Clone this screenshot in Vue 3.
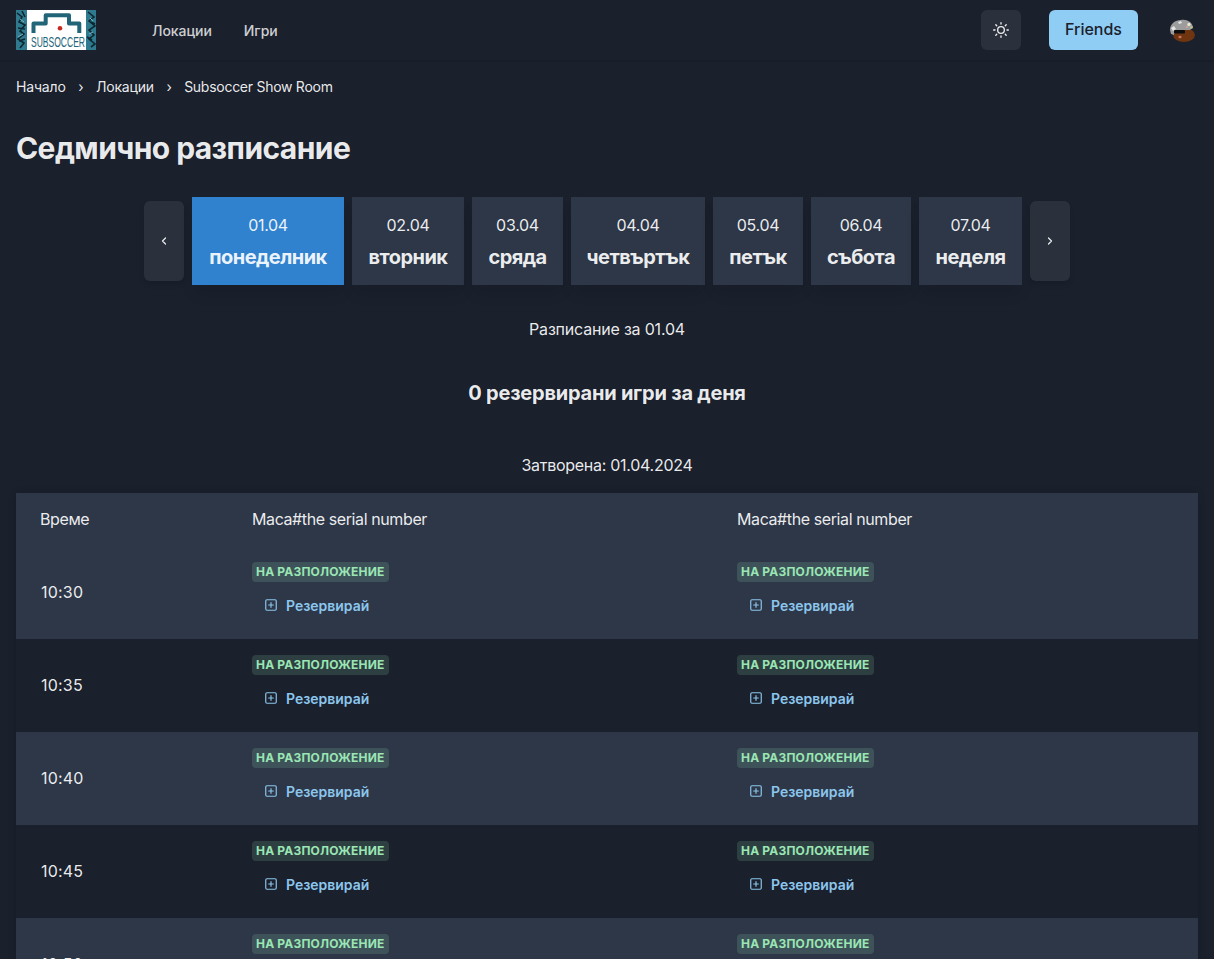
<script setup>
const days = [
  { date: '01.04', name: 'понеделник', width: 152, active: true },
  { date: '02.04', name: 'вторник', width: 112 },
  { date: '03.04', name: 'сряда', width: 91 },
  { date: '04.04', name: 'четвъртък', width: 134 },
  { date: '05.04', name: 'петък', width: 90 },
  { date: '06.04', name: 'събота', width: 100 },
  { date: '07.04', name: 'неделя', width: 103 },
]

const slots = ['10:30', '10:35', '10:40', '10:45', '10:50']
const tables = ['Маса#the serial number', 'Маса#the serial number']
</script>

<template>
  <div class="page">
    <!-- Navbar -->
    <header class="nav">
      <svg class="logo" viewBox="0 0 80 40" aria-label="Subsoccer">
        <rect width="80" height="40" fill="#2f7a8e" />
        <path d="M1 3l5 4-3 5 6 3-5 6 4 3-6 5 6 4-4 5M6 1l3 6M2 18l7 1M3 31l6-2M72 2l6 5-5 4 6 5-6 4 5 5-5 4 6 5-4 3M75 12l4 2M71 27l5 3" stroke="#0d2730" stroke-width="1.6" fill="none" />
        <path d="M4 9l4 3M7 24l-5 3M74 8l3 3M77 22l-4 2" stroke="#7fb4c2" stroke-width="1" fill="none" />
        <rect x="11" y="0" width="59" height="40" fill="#fff" />
        <path d="M17.5 23V13.5H29.7V5.3H53V13.5H63.3V23" stroke="#226478" stroke-width="4" stroke-linejoin="round" fill="none" />
        <circle cx="44" cy="18.3" r="2.3" fill="#c8281e" />
        <text x="15" y="36.8" class="logo-text" textLength="54" lengthAdjust="spacingAndGlyphs">SUBSOCCER</text>
      </svg>
      <nav class="links">
        <a>Локации</a>
        <a>Игри</a>
      </nav>
      <div class="nav-right">
        <button class="theme" aria-label="Тема">
          <svg viewBox="0 0 24 24" width="16" height="16" fill="none" stroke="currentColor" stroke-width="2" stroke-linecap="round">
            <circle cx="12" cy="12" r="5" />
            <path d="M12 1v2M12 21v2M4.2 4.2l1.4 1.4M18.4 18.4l1.4 1.4M1 12h2M21 12h2M4.2 19.8l1.4-1.4M18.4 5.6l1.4-1.4" />
          </svg>
        </button>
        <button class="friends">Friends</button>
        <svg class="avatar" viewBox="0 0 26 23" aria-hidden="true">
          <ellipse cx="15" cy="16" rx="11" ry="7" fill="#6e3510" />
          <path d="M1 11C1 5 6 1 12 1c6-1 11 2 12 7l-3 3H6l-1 5-3-1z" fill="#9c9c9c" />
          <path d="M2 9l3-2 2 3-3 2zM9 3l3-1 1 2-3 1z" fill="#e4e4e4" />
          <rect x="5" y="11" width="11" height="3.4" rx="1" fill="#0d0d0d" />
          <circle cx="20" cy="5.5" r="1.7" fill="#e8e4c8" />
          <circle cx="22.5" cy="8.5" r="1.3" fill="#b9c88a" />
          <circle cx="18" cy="8" r="1" fill="#d8a0a0" />
          <ellipse cx="11" cy="18" rx="1.6" ry="1.3" fill="#d0705e" />
        </svg>
      </div>
    </header>

    <main class="main">
      <!-- Breadcrumb -->
      <ol class="crumbs">
        <li>Начало</li>
        <li class="sep">›</li>
        <li>Локации</li>
        <li class="sep">›</li>
        <li class="crumb-last">Subsoccer Show Room</li>
      </ol>

      <h1 class="title">Седмично разписание</h1>

      <!-- Week picker -->
      <div class="week">
        <button class="arrow" aria-label="Назад">
          <svg viewBox="0 0 24 24" width="12" height="12" fill="none" stroke="currentColor" stroke-width="2.4" stroke-linecap="round" stroke-linejoin="round"><path d="M15 6l-6 6 6 6" /></svg>
        </button>
        <button
          v-for="d in days"
          :key="d.date"
          class="day"
          :class="{ 'day--active': d.active }"
          :style="{ width: d.width + 'px' }"
        >
          <span class="day-date">{{ d.date }}</span>
          <span class="day-name">{{ d.name }}</span>
        </button>
        <button class="arrow" aria-label="Напред">
          <svg viewBox="0 0 24 24" width="12" height="12" fill="none" stroke="currentColor" stroke-width="2.4" stroke-linecap="round" stroke-linejoin="round"><path d="M9 6l6 6-6 6" /></svg>
        </button>
      </div>

      <p class="sub">Разписание за 01.04</p>
      <p class="count">0 резервирани игри за деня</p>
      <p class="closed">Затворена: 01.04.2024</p>

      <!-- Schedule -->
      <table class="grid">
        <thead>
          <tr>
            <th class="col-time">Време</th>
            <th v-for="(t, i) in tables" :key="i">{{ t }}</th>
          </tr>
        </thead>
        <tbody>
          <tr v-for="s in slots" :key="s">
            <td class="col-time time">{{ s }}</td>
            <td v-for="(t, i) in tables" :key="i">
              <span class="badge">На разположение</span>
              <button class="book">
                <svg viewBox="0 0 24 24" width="14" height="14" fill="none" stroke="currentColor" stroke-width="2" stroke-linecap="round">
                  <rect x="3" y="3" width="18" height="18" rx="2" />
                  <path d="M12 8v8M8 12h8" />
                </svg>
                Резервирай
              </button>
            </td>
          </tr>
        </tbody>
      </table>
    </main>
  </div>
</template>

<style>
html, body { margin: 0; background: #1a202c; }
</style>

<style scoped>
.page {
  height: 100vh;
  overflow: hidden;
  background: #1a202c;
  color: rgba(255, 255, 255, .92);
  font-family: Inter, "Noto Sans", sans-serif;
  font-size: 16px;
}

button { font-family: inherit; border: none; cursor: pointer; }

/* Navbar */
.nav {
  display: flex;
  align-items: center;
  height: 60px;
  padding: 0 16px;
  box-sizing: border-box;
  box-shadow: 0 1px 2px rgba(0, 0, 0, .12);
}
.logo { width: 80px; height: 40px; flex-shrink: 0; overflow: visible; }
.logo-text { font-family: "Liberation Sans", sans-serif; font-size: 14.4px; fill: #226478; }
.links { display: flex; gap: 32px; margin-left: 56px; }
.links a { font-size: 14px; font-weight: 500; color: rgba(255, 255, 255, .8); letter-spacing: -.05px; }
.nav-right { display: flex; align-items: center; margin-left: auto; }
.theme {
  width: 40px; height: 40px;
  display: flex; align-items: center; justify-content: center;
  border-radius: 6px;
  background: rgba(255, 255, 255, .08);
  color: rgba(255, 255, 255, .92);
}
.friends {
  margin-left: 28px;
  width: 89px; height: 40px;
  padding: 0 0 2px;
  border-radius: 6px;
  background: #90cdf4;
  color: #1a202c;
  font-size: 16px;
  font-weight: 500;
}
.avatar { width: 26px; height: 23px; margin-left: 31px; margin-right: 3px; }

.main { padding: 0 16px; }

/* Breadcrumb */
.crumbs {
  display: flex;
  align-items: center;
  list-style: none;
  margin: 0;
  padding: 17px 0 0;
  height: 20px;
  font-size: 14px;
  line-height: 20px;
  letter-spacing: -.17px;
}
.sep { margin: 0 12.5px; }
.crumb-last { letter-spacing: -.27px; }

.title {
  margin: 33px 0 0;
  font-size: 30px;
  line-height: 36px;
  font-weight: 700;
  letter-spacing: -.58px;
}

/* Week picker */
.week {
  display: flex;
  justify-content: center;
  align-items: center;
  gap: 8px;
  margin-top: 31px;
}
.arrow {
  width: 40px; height: 80px;
  padding: 0;
  display: flex; align-items: center; justify-content: center;
  border-radius: 6px;
  background: rgba(255, 255, 255, .08);
  color: rgba(255, 255, 255, .92);
  box-shadow: 0 4px 6px -1px rgba(0, 0, 0, .1);
}
.day {
  display: flex;
  flex-direction: column;
  align-items: center;
  height: 88px;
  padding: 16px 0;
  box-sizing: border-box;
  background: #2d3748;
  color: rgba(255, 255, 255, .92);
  box-shadow: 0 10px 15px -3px rgba(0, 0, 0, .1);
}
.day--active { background: #3182ce; }
.day-date { font-size: 16px; line-height: 24px; letter-spacing: -.3px; }
.day-name { font-size: 20px; line-height: 30px; font-weight: 700; margin-top: 5px; letter-spacing: -.55px; }

.sub, .count, .closed { margin: 0; text-align: center; }
.sub { margin-top: 32px; font-size: 16px; line-height: 24px; letter-spacing: -.2px; }
.count { margin-top: 40px; font-size: 20px; line-height: 24px; font-weight: 700; letter-spacing: -.22px; }
.closed { margin-top: 48px; font-size: 16px; line-height: 24px; letter-spacing: -.28px; }

/* Schedule */
.grid {
  width: 100%;
  margin-top: 16px;
  border-collapse: collapse;
  table-layout: fixed;
  box-shadow: 0 0 8px rgba(0, 0, 0, .12);
}
.grid th {
  height: 53px;
  padding: 0 0 2px;
  box-sizing: border-box;
  text-align: left;
  font-size: 16px;
  font-weight: 400;
  letter-spacing: -.4px;
  background: #2d3748;
}
.grid td { height: 93px; padding: 0; vertical-align: top; box-sizing: border-box; }
.grid th.col-time, .grid td.col-time { width: 236px; padding-left: 24px; }
.grid th:nth-child(2), .grid td:nth-child(2) { width: 485px; }
.grid tbody tr:nth-child(odd) { background: #2d3748; }
.grid td.time { vertical-align: middle; padding-left: 25px; padding-bottom: 2px; font-size: 16px; letter-spacing: .2px; }

.badge {
  display: block;
  width: fit-content;
  margin-top: 16px;
  padding: 0 4px;
  border-radius: 4px;
  background: rgba(154, 230, 180, .16);
  color: #9ae6b4;
  font-size: 12px;
  line-height: 20px;
  font-weight: 700;
  letter-spacing: .2px;
  text-transform: uppercase;
}
.book {
  display: flex;
  align-items: center;
  gap: 8px;
  margin-top: 7px;
  height: 32px;
  padding: 0 12px;
  background: none;
  color: #8cc6ec;
  font-size: 14px;
  font-weight: 600;
  letter-spacing: -.02px;
}
</style>
